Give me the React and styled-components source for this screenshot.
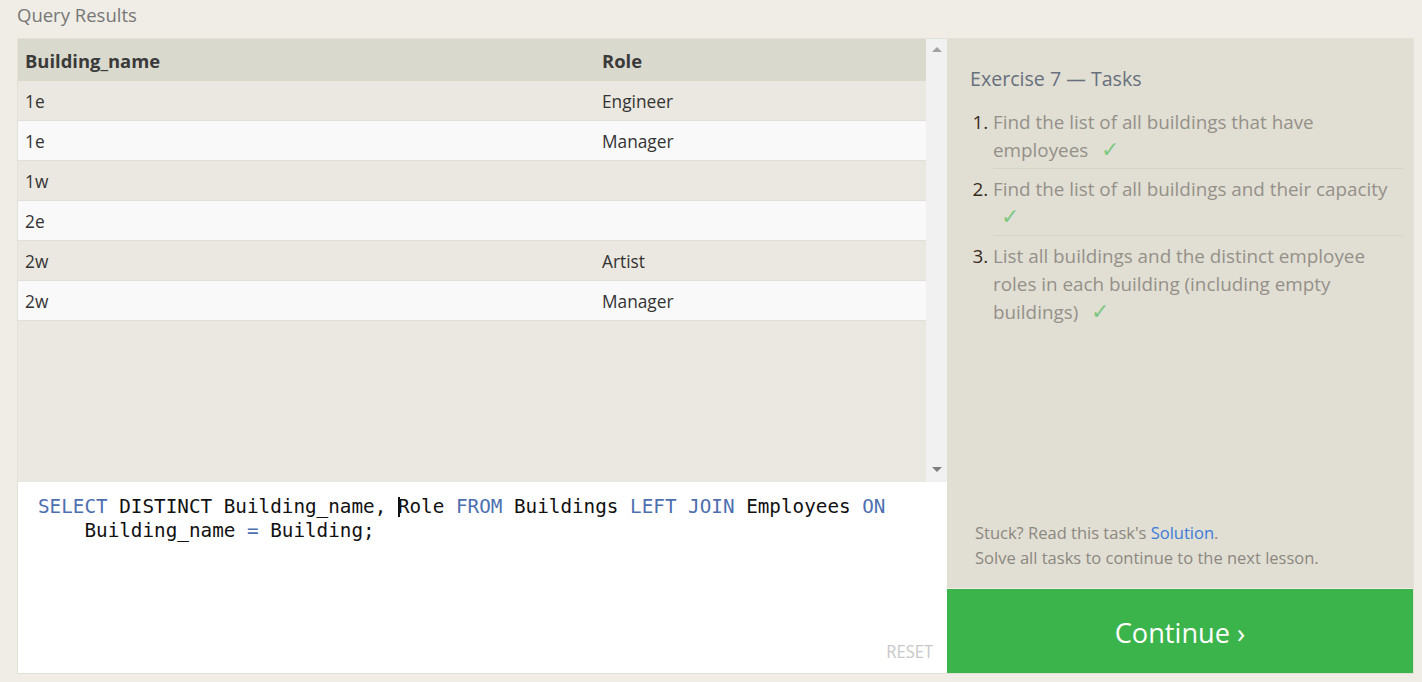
import React from "react";
import styled, { createGlobalStyle } from "styled-components";

const rows = [
  { building: "1e", role: "Engineer" },
  { building: "1e", role: "Manager" },
  { building: "1w", role: "" },
  { building: "2e", role: "" },
  { building: "2w", role: "Artist" },
  { building: "2w", role: "Manager" },
];

const tasks = [
  "Find the list of all buildings that have employees",
  "Find the list of all buildings and their capacity",
  "List all buildings and the distinct employee roles in each building (including empty buildings)",
];

const App = () => {
  return (
    <Page>
      <GlobalStyle />
      <Heading>Query Results</Heading>
      <Frame>
        <LeftPanel>
          <ResultArea>
            <ResultTable>
              <HeadCell>Building_name</HeadCell>
              <HeadCell>Role</HeadCell>
              {rows.map((row, i) => (
                <React.Fragment key={i}>
                  <Cell $even={i % 2 === 1}>{row.building}</Cell>
                  <Cell $even={i % 2 === 1}>{row.role}</Cell>
                </React.Fragment>
              ))}
            </ResultTable>
            <Scrollbar>
              <Arrow $up />
              <Arrow />
            </Scrollbar>
          </ResultArea>
          <Editor>
            <CodeLine>
              <Kw>SELECT</Kw> DISTINCT Building_name, <Caret />Role <Kw>FROM</Kw>{" "}
              Buildings <Kw>LEFT</Kw> <Kw>JOIN</Kw> Employees <Kw>ON</Kw>
            </CodeLine>
            <CodeLine>
              {"    "}Building_name <Kw>=</Kw> Building;
            </CodeLine>
            <ResetButton>RESET</ResetButton>
          </Editor>
        </LeftPanel>
        <RightPanel>
          <TaskBox>
            <TaskTitle>Exercise 7 — Tasks</TaskTitle>
            <TaskList>
              {tasks.map((t, i) => (
                <TaskItem key={i} $last={i === tasks.length - 1}>
                  {t} <Check>✓</Check>
                </TaskItem>
              ))}
            </TaskList>
            <Hint>
              Stuck? Read this task's <HintLink>Solution</HintLink>.
              <br />
              Solve all tasks to continue to the next lesson.
            </Hint>
          </TaskBox>
          <ContinueButton>Continue ›</ContinueButton>
        </RightPanel>
      </Frame>
    </Page>
  );
};

const GlobalStyle = createGlobalStyle`
  html, body {
    margin: 0;
    padding: 0;
    background: #efede6;
  }
  body {
    font-family: "Open Sans", "Noto Sans", sans-serif;
  }
`;

const Page = styled.div`
  width: 1422px;
  height: 682px;
  padding: 0 8px 0 17px;
  box-sizing: border-box;
  overflow: hidden;
`;

const Heading = styled.div`
  height: 38px;
  padding-top: 2px;
  box-sizing: border-box;
  font-size: 18.5px;
  line-height: 26px;
  color: #777;
`;

const Frame = styled.div`
  display: flex;
  width: 1397px;
  height: 636px;
  border: 1px solid #e3e0d7;
  box-sizing: border-box;
`;

const LeftPanel = styled.div`
  width: 929px;
  display: flex;
  flex-direction: column;
`;

const ResultArea = styled.div`
  height: 443px;
  display: flex;
  background: #eae8e0;
`;

const ResultTable = styled.div`
  flex: 1;
  display: grid;
  grid-template-columns: 577px 1fr;
  grid-auto-rows: 40px;
  grid-template-rows: 42px;
  align-content: start;
`;

const HeadCell = styled.div`
  display: flex;
  align-items: center;
  padding-left: 7px;
  background: #dad9cd;
  font-weight: 700;
  font-size: 18.4px;
  color: #3a3a3a;
`;

const Cell = styled.div`
  display: flex;
  align-items: center;
  padding: 1px 0 0 7px;
  background: ${(p) => (p.$even ? "#f9f9f9" : "#eae8e0")};
  border-bottom: 1px solid #e1dfd8;
  font-size: 17.3px;
  color: #333;
`;

const Scrollbar = styled.div`
  width: 21px;
  background: #f1f1f1;
  display: flex;
  flex-direction: column;
  justify-content: space-between;
  align-items: center;
  padding: 8px 0 10px;
  box-sizing: border-box;
`;

const Arrow = styled.div`
  width: 0;
  height: 0;
  border-left: 5px solid transparent;
  border-right: 5px solid transparent;
  ${(p) =>
    p.$up
      ? "border-bottom: 5px solid #a3a3a3;"
      : "border-top: 5px solid #7f7f7f;"}
`;

const Editor = styled.div`
  position: relative;
  flex: 1;
  background: #fff;
  padding: 13px 20px;
  box-sizing: border-box;
`;

const CodeLine = styled.div`
  font-family: "DejaVu Sans Mono", "Liberation Mono", monospace;
  font-size: 19.3px;
  line-height: 24px;
  white-space: pre;
  color: #111;
`;

const Kw = styled.span`
  color: #4d6fb0;
`;

const Caret = styled.span`
  display: inline-block;
  width: 0;
  height: 20px;
  margin-right: -2px;
  border-left: 2px solid #111;
  vertical-align: -4px;
`;

const ResetButton = styled.div`
  position: absolute;
  right: 14px;
  bottom: 11px;
  font-size: 16.5px;
  color: #c8c8c8;
  transform: scaleY(1.08);
`;

const RightPanel = styled.div`
  flex: 1;
  display: flex;
  flex-direction: column;
`;

const TaskBox = styled.div`
  flex: 1;
  background: #e1dfd4;
  padding: 27px 10px 18px 23px;
  display: flex;
  flex-direction: column;
  margin-bottom: 1px;
`;

const TaskTitle = styled.div`
  font-size: 19.6px;
  line-height: 26px;
  color: #68707d;
`;

const TaskList = styled.ol`
  margin: 16px 0 0;
  padding: 0 0 0 23px;
  font-size: 18.85px;
  line-height: 28px;
  color: #959089;
`;

const TaskItem = styled.li`
  padding: ${(p) => (p.$last ? "6px 0 0" : "6px 0 4px")};
  border-bottom: ${(p) => (p.$last ? "none" : "1px solid #d5d3c8")};
  &:first-child {
    padding-top: 0;
  }
  &::marker {
    color: #3a2a22;
  }
`;

const Check = styled.span`
  color: #7ec883;
  margin-left: 8px;
  font-size: 22px;
  line-height: 1;
`;

const Hint = styled.div`
  margin-top: auto;
  padding-left: 5px;
  font-size: 16.5px;
  line-height: 25px;
  color: #8c8780;
`;

const HintLink = styled.span`
  color: #3b7bd8;
`;

const ContinueButton = styled.div`
  height: 84px;
  padding-top: 2px;
  box-sizing: border-box;
  background: #3bb54b;
  color: #fff;
  font-size: 27.2px;
  display: flex;
  align-items: center;
  justify-content: center;
`;

export default App;
